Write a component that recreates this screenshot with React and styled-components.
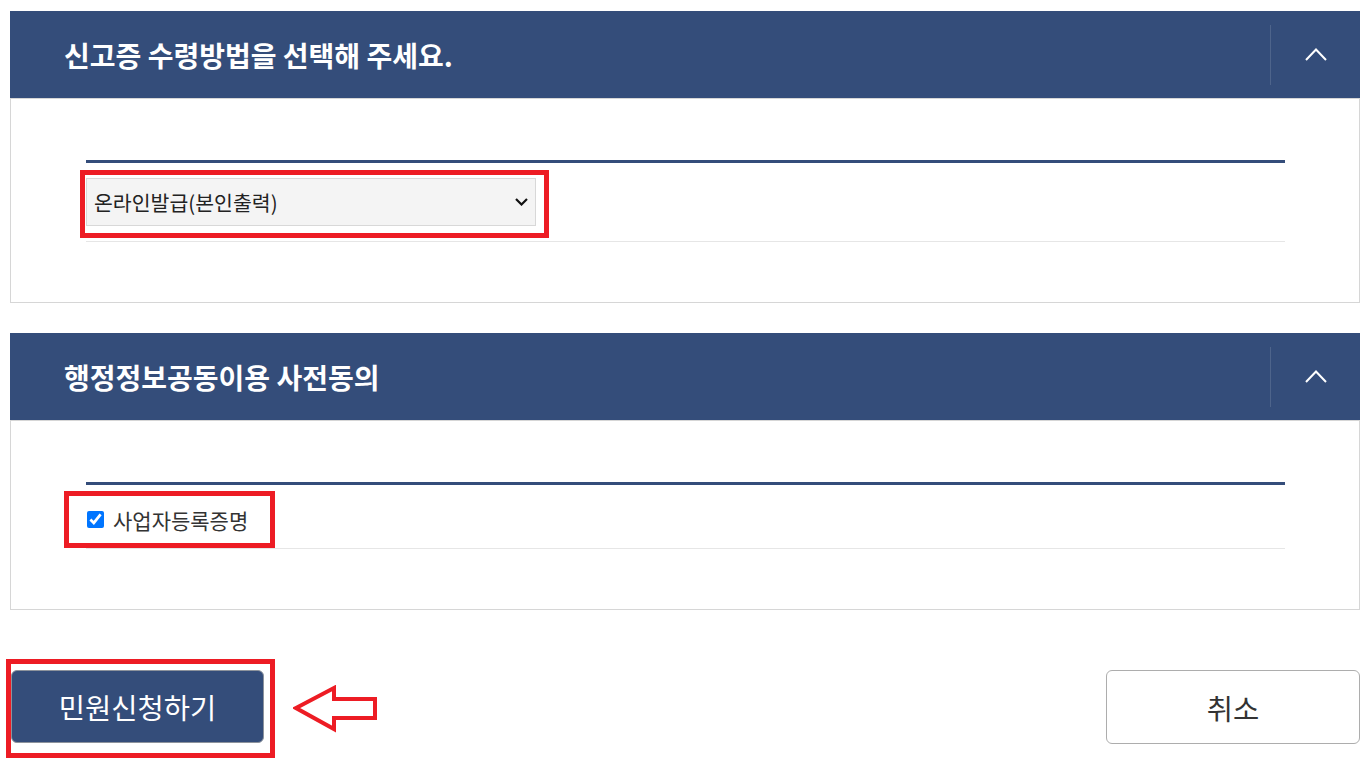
import React from "react";
import styled, { createGlobalStyle } from "styled-components";

const GlobalStyle = createGlobalStyle`
  body {
    margin: 0;
    background: #fff;
    font-family: "Noto Sans CJK KR", "Noto Sans", sans-serif;
  }
`;

const Page = styled.div`
  width: 1350px;
  padding: 11px 10px 0;
`;

const Panel = styled.section`
  margin-bottom: 30px;
`;

const PanelHeader = styled.div`
  display: flex;
  align-items: center;
  justify-content: space-between;
  height: 87px;
  padding-left: 54px;
  background: #344d7a;
`;

const Title = styled.h2`
  margin: 0;
  color: #fff;
  font-size: 28px;
  font-weight: 700;
`;

const Toggle = styled.button`
  display: flex;
  align-items: center;
  justify-content: center;
  width: 90px;
  height: 60px;
  padding: 0;
  border: none;
  border-left: 1px solid rgba(255, 255, 255, 0.13);
  background: transparent;
  cursor: pointer;
`;

const PanelBody = styled.div`
  border: 1px solid #d6d6d6;
  padding: 61px 74px 60px 75px;
`;

const Table = styled.div`
  border-top: 3px solid #344d7a;
`;

const Row = styled.div`
  display: flex;
  align-items: center;
  padding: ${(p) => p.$pad};
  border-bottom: 1px solid #e6e6e6;
`;

// 빨간 표시 박스 (스크린샷 주석)
const Mark = styled.div`
  box-sizing: border-box;
  display: flex;
  align-items: center;
  height: ${(p) => (p.$h ? `${p.$h}px` : "auto")};
  border: 5px solid #ed1c24;
  padding: ${(p) => p.$pad};
  margin-left: ${(p) => p.$shift}px;
`;

const SelectBox = styled.div`
  box-sizing: border-box;
  display: flex;
  align-items: center;
  justify-content: space-between;
  width: 450px;
  height: 48px;
  padding: 0 7px 0 7px;
  background: #f4f4f4;
  border: 1px solid #d8d8d8;
  color: #222;
  font-size: 20.5px;
`;

const CheckLabel = styled.label`
  display: flex;
  align-items: center;
  gap: 9px;
  color: #333;
  font-size: 21px;
`;

const Check = styled.input`
  width: 17px;
  height: 17px;
  margin: 0;
  accent-color: #0075ff;
`;

const Footer = styled.div`
  display: flex;
  align-items: flex-start;
  justify-content: space-between;
  margin-top: 49px;
`;

const LeftGroup = styled.div`
  display: flex;
  align-items: center;
  gap: 18px;
`;

const Button = styled.button`
  box-sizing: border-box;
  width: ${(p) => (p.$primary ? 253 : 254)}px;
  height: ${(p) => (p.$primary ? 73 : 74)}px;
  margin-top: ${(p) => (p.$primary ? 0 : 11)}px;
  border-radius: 6px;
  border: 1px solid ${(p) => (p.$primary ? "#8d939c" : "#adadad")};
  background: ${(p) => (p.$primary ? "#344d7a" : "#fff")};
  color: ${(p) => (p.$primary ? "#fff" : "#333")};
  font-family: inherit;
  font-size: 28.5px;
  cursor: pointer;
`;

const ChevronUp = () => (
  <svg width="22" height="13" viewBox="0 0 22 13">
    <polyline points="1,12 11,1.5 21,12" fill="none" stroke="#fff" strokeWidth="2" />
  </svg>
);

const ChevronDown = () => (
  <svg width="13" height="8" viewBox="0 0 13 8">
    <polyline points="1,1 6.5,6.5 12,1" fill="none" stroke="#111" strokeWidth="2.2" />
  </svg>
);

const Arrow = () => (
  <svg width="86" height="48" viewBox="0 0 86 48">
    <polygon
      points="3,23 41,3 41,14 82,14 82,33 41,33 41,44"
      fill="none"
      stroke="#ed1c24"
      strokeWidth="4"
    />
  </svg>
);

const App = () => {
  return (
    <Page>
      <GlobalStyle />

      <Panel>
        <PanelHeader>
          <Title>신고증 수령방법을 선택해 주세요.</Title>
          <Toggle aria-label="접기">
            <ChevronUp />
          </Toggle>
        </PanelHeader>
        <PanelBody>
          <Table>
            <Row $pad="7px 0 3px">
              <Mark $pad="3px 8px 7px 1px" $shift={-6}>
                <SelectBox role="combobox">
                  <span>온라인발급(본인출력)</span>
                  <ChevronDown />
                </SelectBox>
              </Mark>
            </Row>
          </Table>
        </PanelBody>
      </Panel>

      <Panel>
        <PanelHeader>
          <Title>행정정보공동이용 사전동의</Title>
          <Toggle aria-label="접기">
            <ChevronUp />
          </Toggle>
        </PanelHeader>
        <PanelBody>
          <Table>
            <Row $pad="6px 0 0">
              <Mark $pad="0 22px 0 18px" $shift={-22} $h={57}>
                <CheckLabel>
                  <Check type="checkbox" defaultChecked />
                  사업자등록증명
                </CheckLabel>
              </Mark>
            </Row>
          </Table>
        </PanelBody>
      </Panel>

      <Footer>
        <LeftGroup>
          <Mark $pad="6px 6px 10px 0" $shift={-4}>
            <Button $primary>민원신청하기</Button>
          </Mark>
          <Arrow />
        </LeftGroup>
        <Button>취소</Button>
      </Footer>
    </Page>
  );
};

export default App;
